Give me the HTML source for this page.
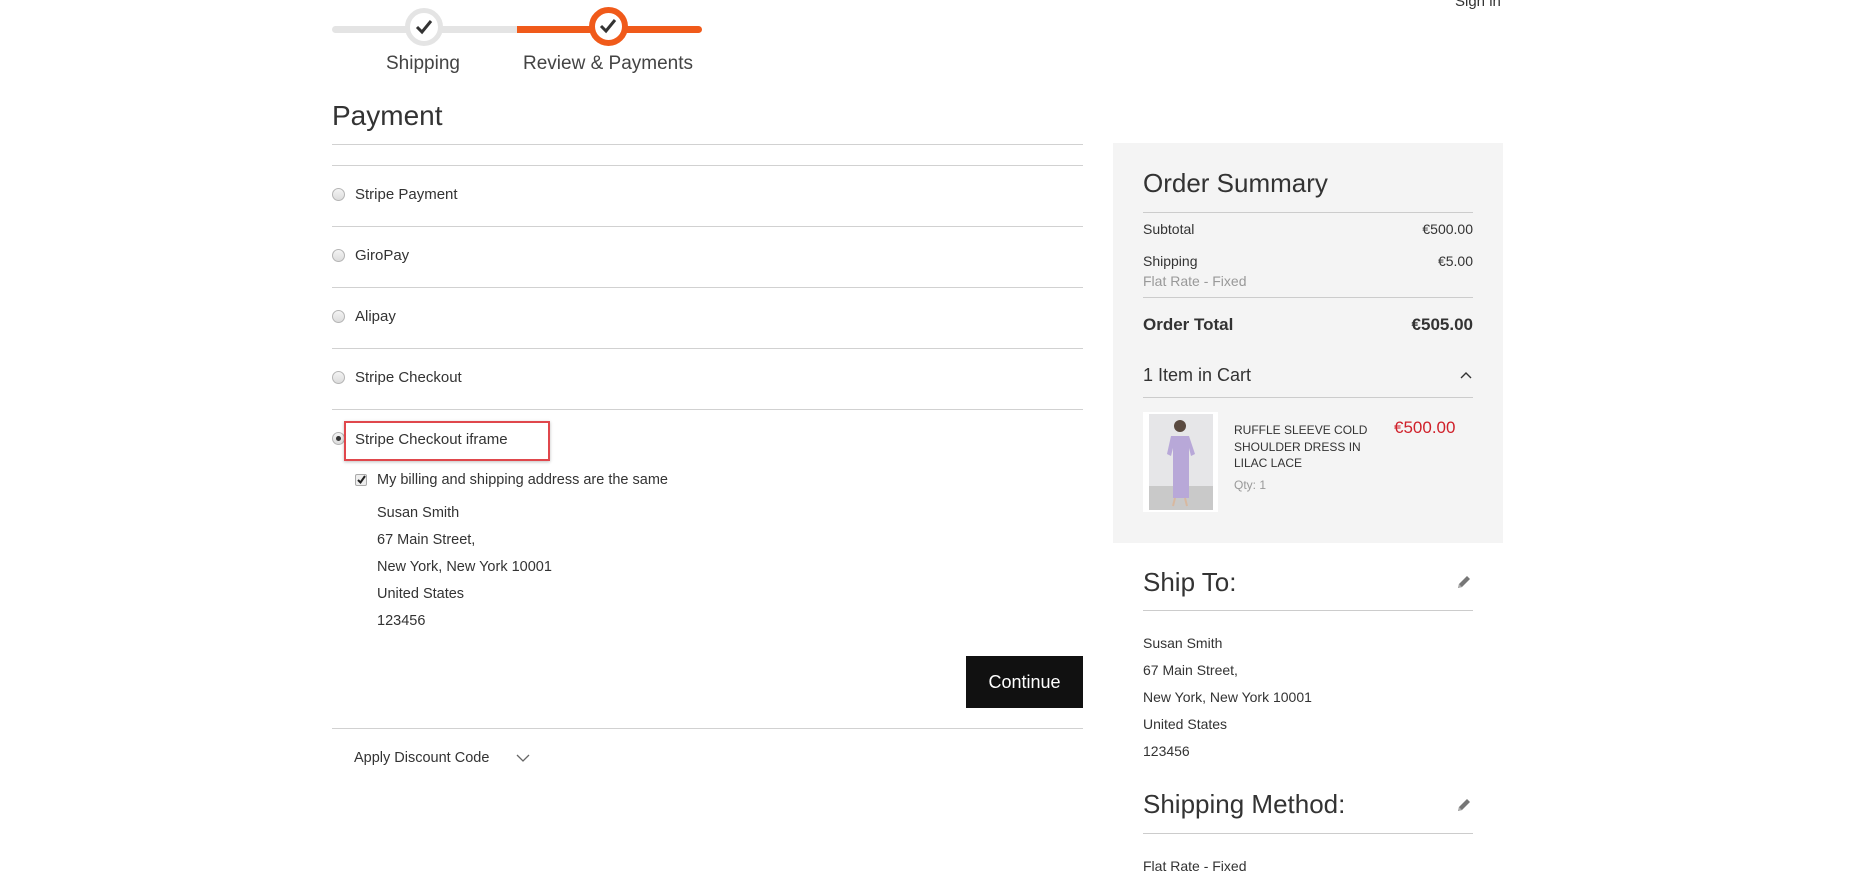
<!DOCTYPE html>
<html><head><meta charset="utf-8"><style>
*{margin:0;padding:0;box-sizing:border-box}
body{width:1856px;height:891px;overflow:hidden;background:#fff;font-family:"Liberation Sans",sans-serif;color:#333;position:relative}
.a{position:absolute;white-space:nowrap}
.hl{position:absolute;height:1px;background:#d1d1d1}
.radio{position:absolute;width:13px;height:13px;border-radius:50%;border:1px solid #b5b5b5;background:linear-gradient(#f4f4f4,#dcdcdc)}
.pm{font-size:15px;color:#333}
.t15{font-size:14.5px;color:#333}
</style></head><body>
<div class="a" style="left:1455px;top:-7px;font-size:15px;color:#333">Sign in</div>

<!-- progress -->
<div class="a" style="left:332px;top:26px;width:185px;height:7px;background:#e4e4e4;border-radius:4px 0 0 4px"></div>
<div class="a" style="left:517px;top:26px;width:185px;height:7px;background:#f05a1a;border-radius:0 4px 4px 0"></div>
<div class="a" style="left:405px;top:8px;width:38px;height:38px;border-radius:50%;background:#fff;border:5px solid #e4e4e4"></div>
<div class="a" style="left:589px;top:7px;width:39px;height:39px;border-radius:50%;background:#fff;border:6px solid #f05a1a"></div>
<svg class="a" style="left:414px;top:17px" width="20" height="20" viewBox="0 0 20 20"><path d="M3 10l5 5 9-11" fill="none" stroke="#333" stroke-width="3"/></svg>
<svg class="a" style="left:598px;top:16px" width="20" height="20" viewBox="0 0 20 20"><path d="M3 10l5 5 9-11" fill="none" stroke="#333" stroke-width="3"/></svg>
<div class="a" style="left:386px;top:53px;font-size:19px;color:#444">Shipping</div>
<div class="a" style="left:523px;top:53px;font-size:19px;color:#444">Review &amp; Payments</div>

<div class="a" style="left:332px;top:100px;font-size:28px;color:#333">Payment</div>
<div class="hl" style="left:332px;top:144px;width:751px"></div>
<div class="hl" style="left:332px;top:165px;width:751px"></div>
<div class="hl" style="left:332px;top:226px;width:751px"></div>
<div class="hl" style="left:332px;top:287px;width:751px"></div>
<div class="hl" style="left:332px;top:348px;width:751px"></div>
<div class="hl" style="left:332px;top:409px;width:751px"></div>

<div class="radio" style="left:332px;top:188px"></div><div class="a pm" style="left:355px;top:186px">Stripe Payment</div>
<div class="radio" style="left:332px;top:249px"></div><div class="a pm" style="left:355px;top:247px">GiroPay</div>
<div class="radio" style="left:332px;top:310px"></div><div class="a pm" style="left:355px;top:308px">Alipay</div>
<div class="radio" style="left:332px;top:371px"></div><div class="a pm" style="left:355px;top:369px">Stripe Checkout</div>
<div class="radio" style="left:332px;top:432px"></div><div class="a" style="left:336px;top:436px;width:5px;height:5px;border-radius:50%;background:#333"></div>
<div class="a" style="left:344px;top:421px;width:206px;height:40px;border:2px solid #e0474c;box-shadow:0 1px 3px rgba(0,0,0,.25)"></div>
<div class="a pm" style="left:355px;top:431px">Stripe Checkout iframe</div>

<div class="a" style="left:355px;top:474px;width:12px;height:12px;border:1px solid #aaa;background:#eee;border-radius:2px"></div>
<svg class="a" style="left:356px;top:474px" width="11" height="11" viewBox="0 0 11 11"><path d="M2 6l2.5 2.5L9 2" fill="none" stroke="#222" stroke-width="2"/></svg>
<div class="a t15" style="left:377px;top:472px">My billing and shipping address are the same</div>
<div class="a t15" style="left:377px;top:505px">Susan Smith</div>
<div class="a t15" style="left:377px;top:532px">67 Main Street,</div>
<div class="a t15" style="left:377px;top:559px">New York, New York 10001</div>
<div class="a t15" style="left:377px;top:586px">United States</div>
<div class="a t15" style="left:377px;top:613px">123456</div>

<div class="a" style="left:966px;top:656px;width:117px;height:52px;background:#111;color:#fff;font-size:18px;text-align:center;line-height:52px">Continue</div>
<div class="hl" style="left:332px;top:728px;width:751px"></div>
<div class="a t15" style="left:354px;top:750px">Apply Discount Code</div>
<svg class="a" style="left:516px;top:753px" width="14" height="10" viewBox="0 0 14 10"><path d="M1 2l6 6 6-6" fill="none" stroke="#666" stroke-width="1.3"/></svg>

<!-- summary -->
<div class="a" style="left:1113px;top:143px;width:390px;height:400px;background:#f4f4f4"></div>
<div class="a" style="left:1143px;top:168px;font-size:26px;color:#333">Order Summary</div>
<div class="hl" style="left:1143px;top:212px;width:330px;background:#ccc"></div>
<div class="a" style="left:1143px;top:221px;font-size:14px">Subtotal</div>
<div class="a" style="right:383px;top:221px;font-size:14px">€500.00</div>
<div class="a" style="left:1143px;top:253px;font-size:14px">Shipping</div>
<div class="a" style="right:383px;top:253px;font-size:14px">€5.00</div>
<div class="a" style="left:1143px;top:273px;font-size:14px;color:#999">Flat Rate - Fixed</div>
<div class="hl" style="left:1143px;top:297px;width:330px;background:#ccc"></div>
<div class="a" style="left:1143px;top:315px;font-size:17px;font-weight:bold">Order Total</div>
<div class="a" style="right:383px;top:315px;font-size:17px;font-weight:bold">€505.00</div>
<div class="a" style="left:1143px;top:365px;font-size:18px">1 Item in Cart</div>
<svg class="a" style="left:1460px;top:371px" width="12" height="8" viewBox="0 0 12 8"><path d="M1 7l5-5 5 5" fill="none" stroke="#333" stroke-width="1.4"/></svg>
<div class="hl" style="left:1143px;top:397px;width:330px;background:#ccc"></div>
<div class="a" style="left:1143px;top:412px;width:75px;height:100px;background:#fff"></div>
<svg class="a" style="left:1149px;top:414px" width="64" height="96" viewBox="0 0 64 96"><rect width="64" height="96" fill="#e6e6e8"/><rect y="72" width="64" height="24" fill="#c9c9c9"/><circle cx="31" cy="12" r="6" fill="#5a4a40"/><path d="M22 22h18l6 18-4 2-2-8 0 50h-16v-50l-2 8-4-2z" fill="#b8a8d8"/><path d="M26 84l-2 8M36 84l2 8" stroke="#d8b8a0" stroke-width="2"/></svg>
<div class="a" style="left:1234px;top:422px;font-size:12px;line-height:16.5px;color:#333">RUFFLE SLEEVE COLD<br>SHOULDER DRESS IN<br>LILAC LACE</div>
<div class="a" style="left:1234px;top:478px;font-size:12px;color:#999">Qty: 1</div>
<div class="a" style="left:1394px;top:418px;font-size:17px;color:#d0202a">€500.00</div>

<div class="a" style="left:1143px;top:567px;font-size:26px">Ship To:</div>
<svg class="a" style="left:1456px;top:574px" width="16" height="16" viewBox="0 0 16 16"><path d="M2 14l1-4 8-8 3 3-8 8z" fill="#777"/><path d="M2 14l1-4 3 3z" fill="#aaa"/></svg>
<div class="hl" style="left:1143px;top:610px;width:330px;background:#ccc"></div>
<div class="a" style="left:1143px;top:635px;font-size:14px">Susan Smith</div>
<div class="a" style="left:1143px;top:662px;font-size:14px">67 Main Street,</div>
<div class="a" style="left:1143px;top:689px;font-size:14px">New York, New York 10001</div>
<div class="a" style="left:1143px;top:716px;font-size:14px">United States</div>
<div class="a" style="left:1143px;top:743px;font-size:14px">123456</div>
<div class="a" style="left:1143px;top:789px;font-size:26px">Shipping Method:</div>
<svg class="a" style="left:1456px;top:797px" width="16" height="16" viewBox="0 0 16 16"><path d="M2 14l1-4 8-8 3 3-8 8z" fill="#777"/><path d="M2 14l1-4 3 3z" fill="#aaa"/></svg>
<div class="hl" style="left:1143px;top:833px;width:330px;background:#ccc"></div>
<div class="a" style="left:1143px;top:858px;font-size:14px">Flat Rate - Fixed</div>
</body></html>
